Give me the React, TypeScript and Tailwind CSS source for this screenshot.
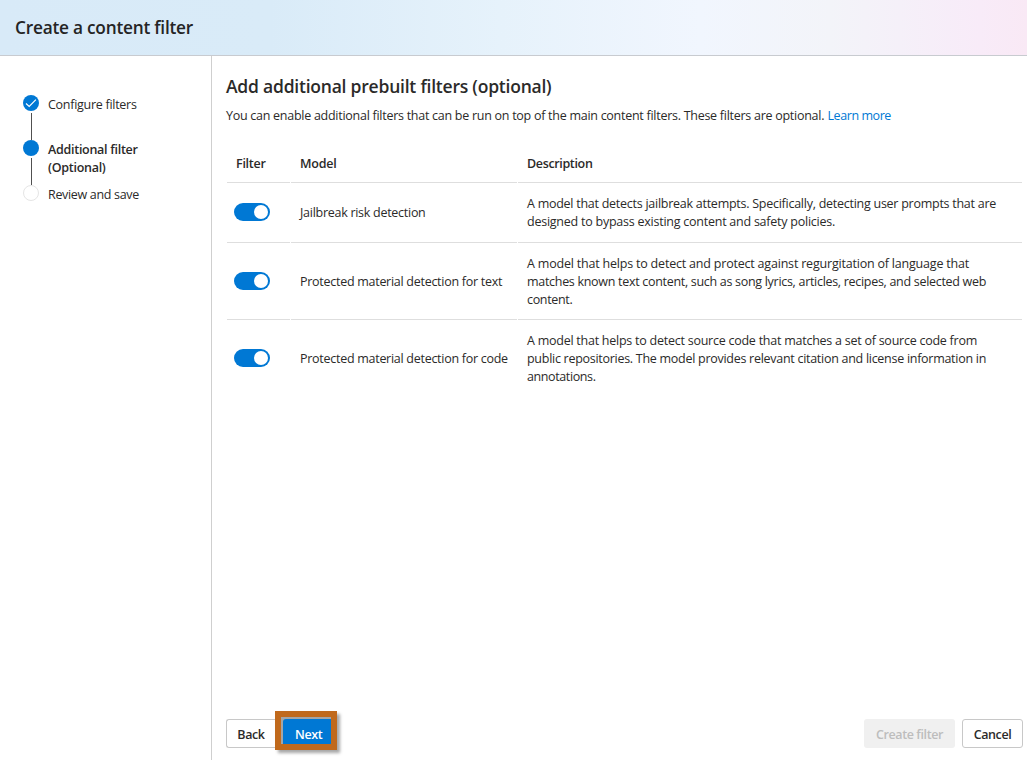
import type { ReactNode } from "react";

type Row = {
  model: string;
  lines: { text: string; spacing: string }[];
  padding: string;
  togglePadding: string;
};

const rows: Row[] = [
  {
    model: "Jailbreak risk detection",
    padding: "pt-3 pb-[11px]",
    togglePadding: "pt-[11px] pb-3",
    lines: [
      { text: "A model that detects jailbreak attempts. Specifically, detecting user prompts that are", spacing: "tracking-[-0.259px]" },
      { text: "designed to bypass existing content and safety policies.", spacing: "tracking-[-0.241px]" },
    ],
  },
  {
    model: "Protected material detection for text",
    padding: "pt-3 pb-2.5",
    togglePadding: "py-[11px]",
    lines: [
      { text: "A model that helps to detect and protect against regurgitation of language that", spacing: "tracking-[-0.199px]" },
      { text: "matches known text content, such as song lyrics, articles, recipes, and selected web", spacing: "tracking-[-0.299px]" },
      { text: "content.", spacing: "tracking-[-0.33px]" },
    ],
  },
  {
    model: "Protected material detection for code",
    padding: "pt-3 pb-2.5",
    togglePadding: "py-[11px]",
    lines: [
      { text: "A model that helps to detect source code that matches a set of source code from", spacing: "tracking-[-0.247px]" },
      { text: "public repositories. The model provides relevant citation and license information in", spacing: "tracking-[-0.278px]" },
      { text: "annotations.", spacing: "tracking-[-0.39px]" },
    ],
  },
];

const columns = "grid grid-cols-[63px_226px_504px] gap-x-px";

function Toggle() {
  return (
    <button role="switch" aria-checked="true" className="flex h-[18px] w-9 items-center justify-end rounded-full bg-[#0078d4] pr-0.5">
      <span className="size-3.5 rounded-full bg-white" />
    </button>
  );
}

function Step({ state, children }: { state: "done" | "current" | "next"; children: ReactNode }) {
  return (
    <li className="flex h-[45px] gap-[9px]">
      <div className="flex w-4 flex-col items-center">
        {state === "next" ? (
          <span className="size-4 shrink-0 rounded-full border border-[#e5e5e5] bg-white" />
        ) : (
          <span className="flex size-4 shrink-0 items-center justify-center rounded-full bg-[#0078d4]">
            {state === "done" && (
              <svg viewBox="0 0 16 16" className="size-4" fill="none" stroke="white" strokeWidth="1.15">
                <path d="M3 8.5 6.2 11.5 12.9 4.7" />
              </svg>
            )}
          </span>
        )}
        {state !== "next" && <span className="mt-0.5 ml-px h-[27px] w-px bg-[#505050]" />}
      </div>
      <div className={state === "current" ? "pt-px font-semibold" : "pt-px"}>{children}</div>
    </li>
  );
}

export default function App() {
  return (
    <div className="flex h-[760px] w-[1027px] flex-col overflow-hidden bg-white font-['Open_Sans',sans-serif] text-[12.5px] leading-[18px] tracking-[-0.275px] whitespace-nowrap text-[#2b2a29]">
      <header className="flex h-14 shrink-0 items-center border-b border-[#c8cbd0] bg-[linear-gradient(90deg,#d8eaf8_0px,#d9ebf8_270px,#e6f2fb_500px,#f1f6fe_700px,#f3f4f9_830px,#f5f0f9_900px,#f8ebf8_980px,#f9e9f5_1027px)] pl-[15px]">
        <h1 className="text-[17.25px] font-semibold tracking-[-0.225px] text-[#242424]">Create a content filter</h1>
      </header>
      <div className="flex min-h-0 flex-1">
        <nav className="w-[212px] shrink-0 border-r border-[#cfcfcf] pt-[39px] pl-[23px]">
          <ol>
            <Step state="done">Configure filters</Step>
            <Step state="current">
              Additional filter
              <br />
              (Optional)
            </Step>
            <Step state="next"><span className="tracking-[-0.32px]">Review and save</span></Step>
          </ol>
        </nav>
        <main className="flex flex-1 flex-col pl-[14px]">
          <h2 className="mt-[18px] text-[17.5px] leading-6 font-semibold tracking-[-0.22px]">Add additional prebuilt filters (optional)</h2>
          <p className="mt-[9px] flex">
            <span className="w-[601.5px] tracking-[-0.27px]">You can enable additional filters that can be run on top of the main content filters. These filters are optional.</span>
            <a href="#" className="tracking-[-0.43px] text-[#0078d4]">Learn more</a>
          </p>
          <section className="mt-[19px] pl-px">
            <div className={`${columns} font-semibold *:flex *:h-[39px] *:items-center *:border-b *:border-[#dedede] *:pt-0.5`}>
              <div className="pl-[9px]">Filter</div>
              <div className="pl-[9px] tracking-[-0.2px]">Model</div>
              <div className="pl-[9px] tracking-[-0.35px]">Description</div>
            </div>
            {rows.map((row, i) => (
              <div
                key={row.model}
                className={`${columns} *:flex *:items-center ${i < 2 ? "*:border-b *:border-[#dedede]" : ""}`}
              >
                <div className={`${row.togglePadding} pl-[7px]`}>
                  <Toggle />
                </div>
                <div className={`${row.padding} pl-[9px]`}>{row.model}</div>
                <div className={`${row.padding} pl-[9px]`}>
                  <div>
                    {row.lines.map((line) => (
                      <p key={line.text} className={line.spacing}>{line.text}</p>
                    ))}
                  </div>
                </div>
              </div>
            ))}
          </section>
          <footer className="mt-auto mb-[9px] flex h-10 pr-1 font-semibold tracking-[-0.4px]">
            <button className="mt-2 h-[29px] w-[49px] rounded-l-[3px] border border-r-0 border-[#c8c8c8] pt-0.5">Back</button>
            <div className="h-[39px] w-[62px] border-6 border-[#c0691c] shadow-[3px_3px_3px_rgba(0,0,0,0.35)]">
              <button className="flex h-[27px] w-[50px] items-center justify-center border-t-2 border-l-2 border-[#a5a5a5] bg-[#a5a5a5] text-white">
                <span className="flex h-full w-full items-center rounded-tl-[3px] bg-[#0078d4] pt-1.5 pl-3">Next</span>
              </button>
            </div>
            <button disabled className="mt-2 ml-auto h-[29px] w-[91px] rounded-[3px] bg-[#f0f0f0] pt-0.5 text-[#bdbdbd]">Create filter</button>
            <button className="mt-2 ml-[7px] h-[29px] w-[61px] rounded-[3px] border border-[#c8c8c8] pt-0.5">Cancel</button>
          </footer>
        </main>
      </div>
    </div>
  );
}
